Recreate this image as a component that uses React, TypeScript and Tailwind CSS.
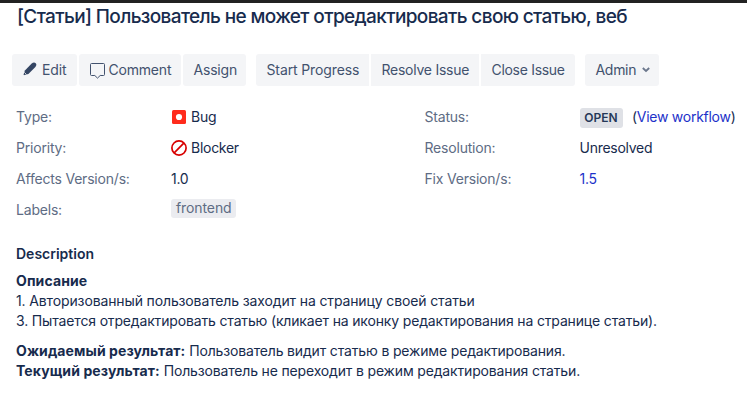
import React from "react";

function PencilIcon() {
  return (
    <svg width="14" height="14" viewBox="0 0 14 14" fill="#344563" className="mb-[3px] shrink-0">
      <path d="M1.9 8.4 8.7 1.6Q10.9-.3 12.7 1.2 14.1 3 12.4 5L5.4 11.9 1.4 13.1Q.4 13.3.7 12.3Z" />
      <path d="M1.4 10.4 3.4 12.4" stroke="#f4f5f7" strokeWidth=".8" />
    </svg>
  );
}

function CommentIcon() {
  return (
    <svg width="15" height="16" viewBox="0 0 15 16" fill="none" stroke="#42526e" strokeWidth="1" className="mt-px shrink-0">
      <path d="M1.5.5H13.5Q14.5.5 14.5 1.5V11.5Q14.5 12.5 13.5 12.5H10.2L7.5 15.1 4.8 12.5H1.5Q.5 12.5.5 11.5V1.5Q.5.5 1.5.5Z" />
    </svg>
  );
}

function ToolButton({ className, children }: { className: string; children: React.ReactNode }) {
  return (
    <button className={`flex h-8 items-center bg-[#f4f5f7] pl-[10.5px] tracking-[-0.12px] whitespace-nowrap text-[#42526e] ${className}`}>
      {children}
    </button>
  );
}

function Field({ label, children }: { label: string; children: React.ReactNode }) {
  return (
    <div className="flex h-[31px] items-center whitespace-nowrap">
      <dt className="w-[155px] shrink-0 tracking-[-0.2px] text-[#5e6c84]">{label}</dt>
      <dd className="flex items-center tracking-[-0.27px]">{children}</dd>
    </div>
  );
}

export default function App() {
  return (
    <main className="h-[405px] w-[747px] overflow-hidden border-t-[3px] border-[#222] bg-white font-['Inter','Liberation_Sans',sans-serif] text-[14px] leading-5 text-[#172b4d]">
      <h1 className="mt-[2px] ml-[17px] h-6 text-[19px] leading-6 font-medium tracking-[-0.63px] whitespace-nowrap">
        [Статьи] Пользователь не может отредактировать свою статью, веб
      </h1>
      <div className="mt-[25px] ml-3 flex gap-[10px]">
        <div className="flex gap-[2px]">
          <ToolButton className="w-[65px] rounded-[3px]"><PencilIcon /><span className="ml-[5.5px]">Edit</span></ToolButton>
          <ToolButton className="w-[102px] rounded-[3px]"><CommentIcon /><span className="ml-1 tracking-[-0.2px]">Comment</span></ToolButton>
          <ToolButton className="w-[63px] rounded-[3px]"><span className="tracking-[-0.2px]">Assign</span></ToolButton>
        </div>
        <div className="flex gap-[2px]">
          <ToolButton className="w-[113px] rounded-l-[3px]">Start Progress</ToolButton>
          <ToolButton className="w-[108px]"><span className="tracking-[-0.25px]">Resolve Issue</span></ToolButton>
          <ToolButton className="w-[94px] rounded-r-[3px]"><span className="tracking-[-0.3px]">Close Issue</span></ToolButton>
        </div>
        <ToolButton className="w-[74px] rounded-[3px]">
          <span className="tracking-[-0.3px]">Admin</span>
          <svg width="8" height="6" viewBox="0 0 8 6" fill="none" stroke="#6b778c" strokeWidth="1.8" className="ml-[6px]"><path d="m.8 1 3.2 3 3.2-3" /></svg>
        </ToolButton>
      </div>
      <dl className="mt-[15px] ml-4 flex">
        <div className="w-[408.5px]">
          <Field label="Type:">
            <svg width="15" height="14" viewBox="0 0 15 14" className="mr-1 ml-px"><rect width="14" height="14" rx="1.5" fill="#ff2b1c" /><circle cx="7" cy="7" r="3.1" fill="#fff" /></svg>
            Bug
          </Field>
          <Field label="Priority:">
            <svg width="16" height="16" viewBox="0 0 16 16" fill="none" stroke="#d80000" strokeWidth="1.7" className="mr-1"><circle cx="8" cy="8" r="7.1" /><path d="m3.2 12.8 9.6-9.6" /></svg>
            Blocker
          </Field>
          <Field label="Affects Version/s:">1.0</Field>
          <Field label="Labels:">
            <span className="mb-[2px] h-[19px] w-[65px] rounded-[3px] bg-[#ebecf0] pl-[5px] leading-[17px] tracking-[-0.1px] text-[#5e6c84]">frontend</span>
          </Field>
        </div>
        <div>
          <Field label="Status:">
            <span className="mt-[2px] mr-[9.5px] h-5 w-[43px] rounded-[3px] bg-[#dfe1e6] text-center text-[12px] leading-5 font-semibold tracking-normal text-[#253858]">OPEN</span>
            (<a className="text-[#1d32c9]">View workflow</a>)
          </Field>
          <Field label="Resolution:">Unresolved</Field>
          <Field label="Fix Version/s:"><a className="text-[#1d32c9]">1.5</a></Field>
        </div>
      </dl>
      <section className="mt-[19px] ml-4 tracking-[-0.16px] whitespace-nowrap">
        <h2 className="font-semibold tracking-normal">Description</h2>
        <p className="mt-[7px]"><b className="font-bold tracking-[0.12px]">Описание</b><br /><span className="tracking-[-0.13px]">1. Авторизованный пользователь заходит на страницу своей статьи</span><br />3. Пытается отредактировать статью (кликает на иконку редактирования на странице статьи).</p>
        <p className="mt-[10px]"><b className="font-bold tracking-[0.1px]">Ожидаемый результат:</b> Пользователь видит статью в режиме редактирования.<br /><b className="font-bold tracking-[0.12px]">Текущий результат:</b> Пользователь не переходит в режим редактирования статьи.</p>
      </section>
    </main>
  );
}
